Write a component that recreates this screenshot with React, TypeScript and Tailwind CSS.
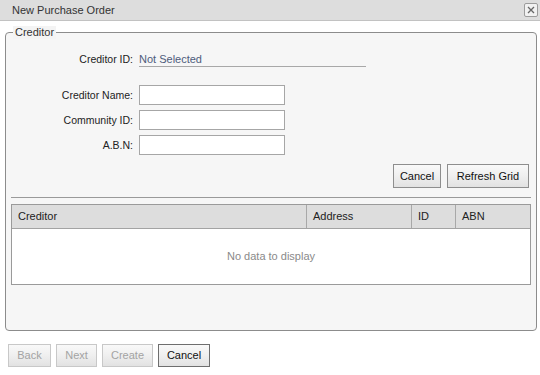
import React from "react";

function Btn({ label, w, h, disabled, dark }: { label: string; w: string; h: string; disabled?: boolean; dark?: boolean }) {
  const cls = disabled
    ? "border-[#c8c8c8] text-[#a3a3a3]"
    : dark
    ? "border-[#6e6e6e] text-[#111]"
    : "border-[#8e8e8e] text-[#111]";
  return (
    <div
      className={`${w} ${h} ${cls} border bg-linear-to-b from-[#f9f9f9] via-[#efefef] to-[#e2e2e2] flex items-center justify-center leading-[13px]`}
    >
      {label}
    </div>
  );
}

function FormRow({ label }: { label: string }) {
  return (
    <div className="flex items-center h-[20px]">
      <div className="w-[127px] text-right leading-[13px] text-[10.5px]">{label}</div>
      <div className="ml-[6px] w-[146px] h-[20px] border border-[#a6a6a6] bg-white" />
    </div>
  );
}

export default function App() {
  return (
    <div className="w-[540px] h-[375px] bg-white flex flex-col font-['Liberation_Sans',Arial,sans-serif] text-[11px] text-[#222]">
      <div className="h-[21px] shrink-0 bg-[#dddddd] border-b border-[#c2c2c2] flex items-center justify-between pl-[12px] pr-[2px]">
        <span className="text-[#333] leading-[13px]">New Purchase Order</span>
        <div className="w-[14px] h-[14px] border border-[#9c9c9c] rounded-[2px] bg-[#f1f1f1] flex items-center justify-center">
          <svg width="8" height="8" viewBox="0 0 8 8">
            <path d="M1 1L7 7M7 1L1 7" stroke="#666" strokeWidth="1.3" />
          </svg>
        </div>
      </div>

      <div className="pl-[5px] pr-[3px] mt-[11px]">
        <div className="relative h-[299px] border border-[#8c8c8c] rounded-[4px] bg-[#f6f6f6] flex flex-col">
          <div className="absolute left-[7px] top-[-7px] px-[2px] leading-[13px] bg-[#f4f4f4] text-[#333]">Creditor</div>

          <div className="pt-[20px] flex items-start">
            <div className="w-[127px] text-right leading-[13px] text-[10.5px]">Creditor ID:</div>
            <div className="ml-[6px] w-[227px] border-b border-[#a8a8a8] leading-[13px] text-[#4e5c7c]">Not Selected</div>
          </div>

          <div className="mt-[18px] flex flex-col gap-[5px]">
            <FormRow label="Creditor Name:" />
            <FormRow label="Community ID:" />
            <FormRow label="A.B.N:" />
          </div>

          <div className="mt-[9px] flex justify-end gap-[6px] pr-[7px]">
            <Btn label="Cancel" w="w-[48px]" h="h-[24px]" />
            <Btn label="Refresh Grid" w="w-[82px]" h="h-[24px]" />
          </div>

          <div className="mt-[9px] mx-[5px] h-px bg-[#9a9a9a]" />

          <div className="mt-[6px] mx-[5px] border border-[#9a9a9a] bg-white">
            <div className="h-[24px] flex bg-[#dddddd] border-b border-[#a3a3a3] leading-[13px] text-[#222]">
              <div className="w-[295px] border-r border-[#a8a8a8] pl-[6px] flex items-center">Creditor</div>
              <div className="w-[105px] border-r border-[#a8a8a8] pl-[6px] flex items-center">Address</div>
              <div className="w-[44px] border-r border-[#a8a8a8] pl-[6px] flex items-center">ID</div>
              <div className="flex-1 pl-[6px] flex items-center">ABN</div>
            </div>
            <div className="h-[55px] flex items-center justify-center text-[#8a8a8a] leading-[13px]">No data to display</div>
          </div>
        </div>
      </div>

      <div className="mt-[13px] pl-[8px] flex gap-[5px]">
        <Btn label="Back" w="w-[43px]" h="h-[23px]" disabled />
        <Btn label="Next" w="w-[41px]" h="h-[23px]" disabled />
        <Btn label="Create" w="w-[51px]" h="h-[23px]" disabled />
        <Btn label="Cancel" w="w-[52px]" h="h-[23px]" dark />
      </div>
    </div>
  );
}
